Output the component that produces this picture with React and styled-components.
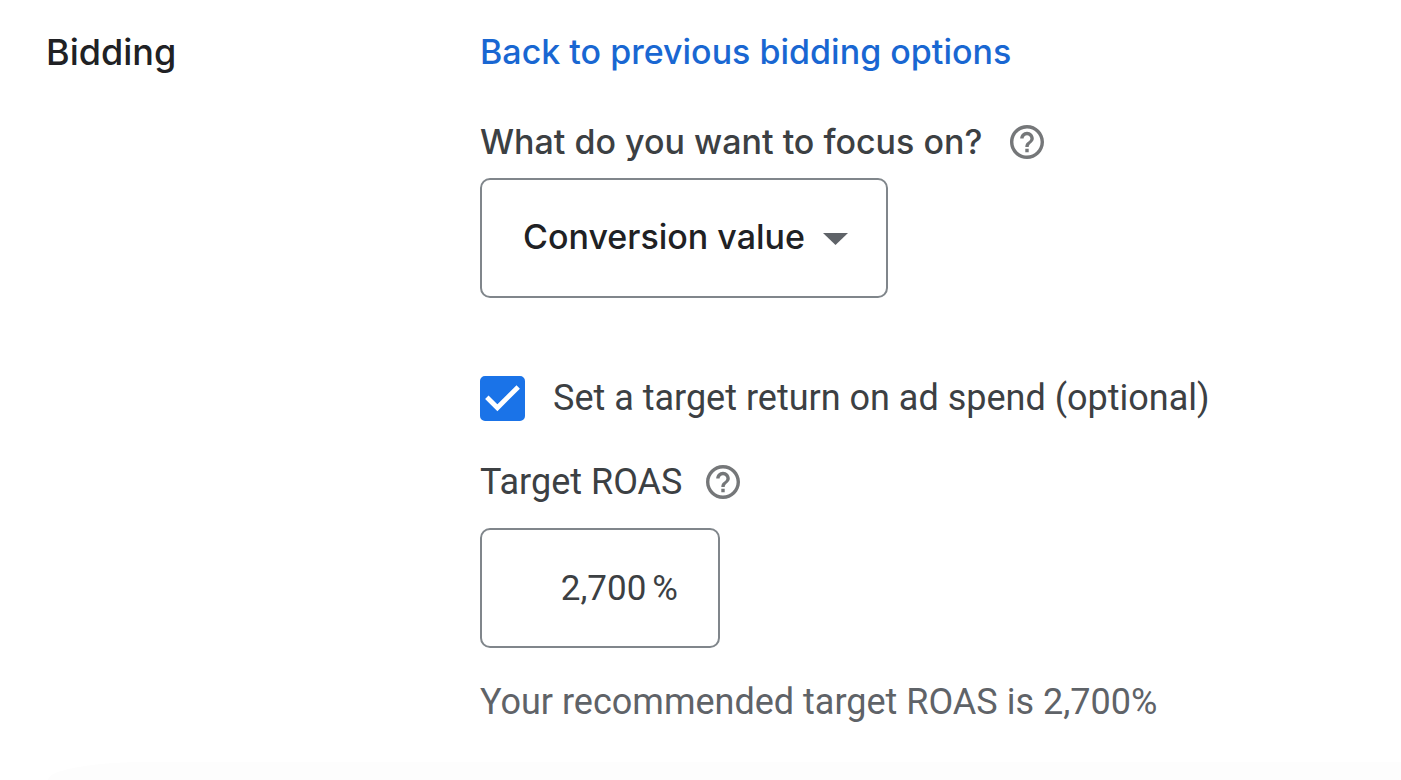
import React, { useState } from 'react';
import styled, { createGlobalStyle } from 'styled-components';

const GlobalStyle = createGlobalStyle`
  * {
    box-sizing: border-box;
  }
  body {
    margin: 0;
    background: #fff;
    font-family: Roboto, "Liberation Sans", sans-serif;
    color: #3c4043;
  }
`;

const Page = styled.div`
  display: flex;
  flex-direction: column;
  justify-content: space-between;
  min-height: 100vh;
`;

const Section = styled.section`
  display: grid;
  grid-template-columns: 434px 1fr;
  padding: 28px 46px 0;
`;

const Title = styled.h2`
  margin: 0;
  font-family: Inter, sans-serif;
  font-size: 36px;
  font-weight: 500;
  line-height: 48px;
  color: #202124;
`;

const Content = styled.div`
  display: flex;
  flex-direction: column;
  align-items: flex-start;
`;

const BackLink = styled.a`
  font-family: Inter, sans-serif;
  font-size: 34px;
  font-weight: 500;
  line-height: 48px;
  color: #1967d2;
  text-decoration: none;
`;

const LabelRow = styled.div`
  display: flex;
  align-items: center;
  gap: ${(props) => props.$gap};
  margin-top: ${(props) => props.$top};
`;

const Label = styled.label`
  font-family: ${(props) => (props.$strong ? 'Inter, sans-serif' : 'inherit')};
  font-size: ${(props) => (props.$strong ? '34px' : '36px')};
  font-weight: ${(props) => (props.$strong ? 500 : 400)};
  line-height: 48px;
`;

const HelpButton = styled.button`
  display: flex;
  padding: 0;
  border: none;
  background: none;
  color: #757779;
  cursor: pointer;
`;

const SelectWrap = styled.div`
  position: relative;
  margin-top: 12px;
`;

const Select = styled.select`
  appearance: none;
  height: 120px;
  padding: 0 81px 4px 41px;
  border: 2px solid #80868b;
  border-radius: 10px;
  background: #fff;
  font-family: Inter, sans-serif;
  font-size: 34px;
  font-weight: 500;
  color: #202124;
`;

const Arrow = styled.svg`
  position: absolute;
  top: 55px;
  right: 40px;
  pointer-events: none;
`;

const CheckRow = styled.label`
  display: flex;
  align-items: center;
  gap: 28px;
  margin-top: 76px;
  font-size: 36px;
  line-height: 48px;
`;

const CheckWrap = styled.span`
  position: relative;
  display: flex;
`;

const Checkbox = styled.input`
  appearance: none;
  width: 45px;
  height: 45px;
  margin: 0;
  border: 5px solid #5f6368;
  border-radius: 5px;

  &:checked {
    border-color: #1a73e8;
    background: #1a73e8;
  }
`;

const Tick = styled.svg`
  position: absolute;
  inset: 0;
  pointer-events: none;
`;

const PercentBox = styled.div`
  display: flex;
  align-items: center;
  gap: 6px;
  width: 240px;
  height: 120px;
  margin-top: 22px;
  padding: 0 40px;
  border: 2px solid #80868b;
  border-radius: 10px;
  font-size: 35px;
`;

const PercentInput = styled.input`
  flex: 1;
  min-width: 0;
  padding: 0;
  border: none;
  outline: none;
  background: none;
  font: inherit;
  color: inherit;
  text-align: right;
`;

const Hint = styled.p`
  margin: 30px 0 0;
  font-size: 36px;
  line-height: 48px;
  color: #5f6368;
`;

const NextCard = styled.div`
  height: 18px;
  margin-left: 48px;
  border-top-left-radius: 100px 18px;
  background: #fdfdfd;
`;

function Help({ label }) {
  return (
    <HelpButton type="button" aria-label={label}>
      <svg width="34" height="34" viewBox="2 2 20 20" fill="currentColor">
        <path d="M11 18h2v-2h-2v2zm1-16C6.48 2 2 6.48 2 12s4.48 10 10 10 10-4.48 10-10S17.52 2 12 2zm0 18c-4.41 0-8-3.59-8-8s3.59-8 8-8 8 3.59 8 8-3.59 8-8 8zm0-14c-2.21 0-4 1.79-4 4h2c0-1.1.9-2 2-2s2 .9 2 2c0 2-3 1.75-3 5h2c0-2.25 3-2.5 3-5 0-2.21-1.79-4-4-4z" />
      </svg>
    </HelpButton>
  );
}

function App() {
  const [useTarget, setUseTarget] = useState(true);
  const [roas, setRoas] = useState('2,700');

  return (
    <Page>
      <GlobalStyle />
      <Section>
        <Title>Bidding</Title>
        <Content>
          <BackLink href="#options">Back to previous bidding options</BackLink>

          <LabelRow $top="42px" $gap="28px">
            <Label $strong htmlFor="focus">What do you want to focus on?</Label>
            <Help label="About bidding focus" />
          </LabelRow>
          <SelectWrap>
            <Select id="focus">
              <option>Conversion value</option>
            </Select>
            <Arrow width="25" height="12" viewBox="0 0 25 12">
              <path d="M0 0h25L12.5 12z" fill="#5f6368" />
            </Arrow>
          </SelectWrap>

          <CheckRow>
            <CheckWrap>
              <Checkbox
                type="checkbox"
                checked={useTarget}
                onChange={(e) => setUseTarget(e.target.checked)}
              />
              {useTarget && (
                <Tick width="45" height="45" viewBox="0 0 45 45">
                  <path
                    d="M6.8 21.2 17.4 31.8 38.2 11"
                    fill="none"
                    stroke="#fff"
                    strokeWidth="4.8"
                  />
                </Tick>
              )}
            </CheckWrap>
            Set a target return on ad spend (optional)
          </CheckRow>

          <LabelRow $top="36px" $gap="24px">
            <Label htmlFor="roas">Target ROAS</Label>
            <Help label="About target ROAS" />
          </LabelRow>
          <PercentBox>
            <PercentInput
              id="roas"
              type="text"
              value={roas}
              onChange={(e) => setRoas(e.target.value)}
            />
            <span>%</span>
          </PercentBox>
          <Hint>Your recommended target ROAS is 2,700%</Hint>
        </Content>
      </Section>
      <NextCard />
    </Page>
  );
}

export default App;
